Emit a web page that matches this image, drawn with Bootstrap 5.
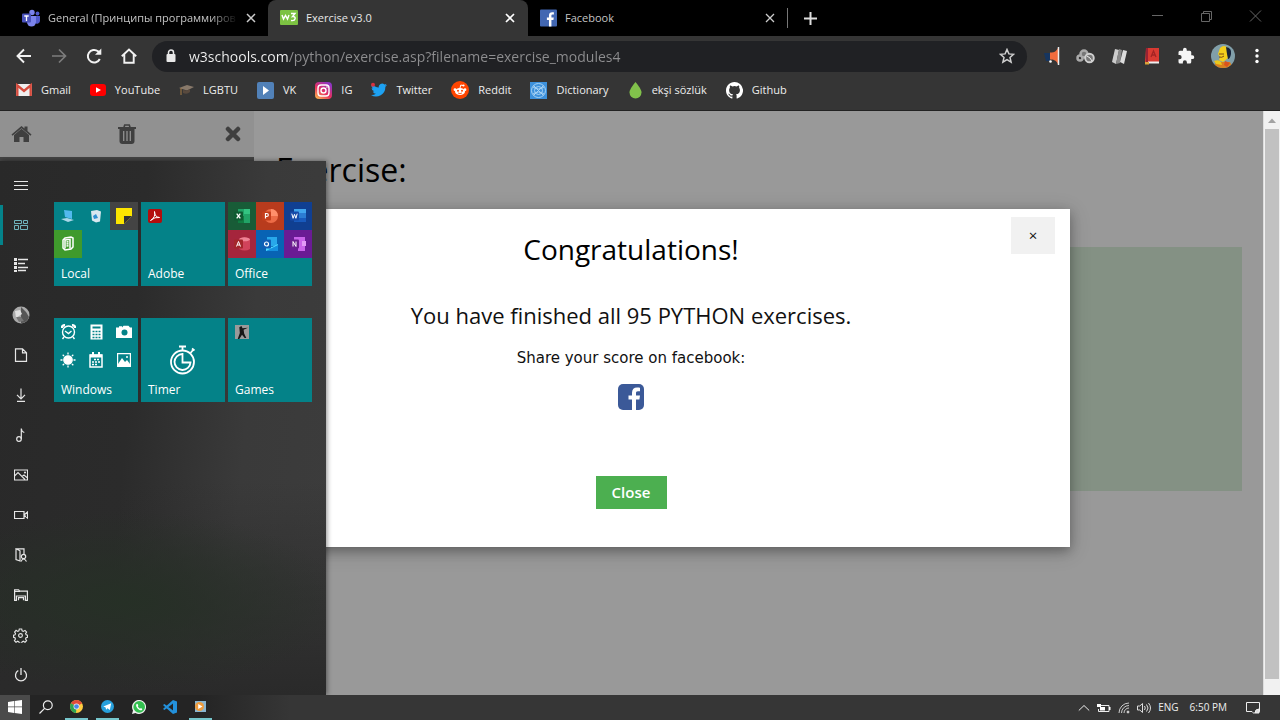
<!DOCTYPE html>
<html lang="en">
<head>
<meta charset="utf-8">
<meta name="viewport" content="width=device-width, initial-scale=1">
<title>Exercise v3.0</title>
<link href="https://cdn.jsdelivr.net/npm/bootstrap@5.3.0/dist/css/bootstrap.min.css" rel="stylesheet">
<script src="https://cdn.jsdelivr.net/npm/bootstrap@5.3.0/dist/js/bootstrap.bundle.min.js" defer></script>
<style>
  body { font-family: "Open Sans", "Noto Sans", sans-serif; background: #353535; overflow: hidden; font-size: 11px; }
  svg { display: block; flex: none; }
  button { background: none; border: 0; padding: 0; color: inherit; display: flex; align-items: center; justify-content: center; }

  /* browser tabs */
  .tab-strip { height: 36px; background: #000; }
  .page-tab { flex: 0 1 259px; min-width: 0; height: 36px; padding: 0 12px; color: #c4c4c4; }
  .page-tab.first { flex-basis: 268px; padding-left: 22px; }
  .page-tab.current { flex-basis: 260px; background: #353535; color: #e8e8e8; border-radius: 8px 8px 0 0; padding-right: 13px; }
  .page-tab .tab-title { flex: 1; min-width: 0; overflow: hidden; white-space: nowrap; }
  .tab-title.faded { -webkit-mask-image: linear-gradient(90deg, #000 85%, transparent); mask-image: linear-gradient(90deg, #000 85%, transparent); }
  .window-buttons { gap: 36px; color: #666; padding-right: 18px; padding-bottom: 4px; }

  /* toolbar */
  .tool-row { height: 40px; padding: 0 17px 0 15px; color: #f2f2f2; }
  .nav-buttons { gap: 17px; width: 137px; }
  .address-bar { height: 31px; border-radius: 16px; background: #202124; padding: 0 12px 0 13px; }
  .address-bar input { font-size: 14px; border: 0; outline: 0; padding: 0; min-width: 0; color: transparent;
    background: linear-gradient(90deg, #f4f4f4 103px, #8e8e90 103px); -webkit-background-clip: text; background-clip: text; }
  .extension-buttons { gap: 16px; margin-left: 16px; }

  .bookmark-row { height: 35px; padding: 0 16px 6px; gap: 19px; border-bottom: 1px solid #222; }
  .bookmark-row a { color: #eee; text-decoration: none; gap: 9px; font-size: 11px; white-space: nowrap; }

  /* web page */
  .web-view { background: #999; }
  .side-panel { flex: 0 0 254px; background: #444; }
  .side-tools { height: 46px; background: #919191; padding: 0 13px 0 11px; color: #3f3f3f; }
  .exercise-body { padding: 38px 21px 0 22px; color: #000; }
  .exercise-body h1 { font-size: 32px; line-height: 42px; margin: 0 0 56px; font-weight: 400; }
  .answer-box { height: 244px; background: #849184; }
  .scroll-track { flex: 0 0 17px; background: #f1f1f1; border-left: 1px solid #ddd; }
  .scroll-thumb { background: #c1c1c1; margin: 0 1px; flex: 1; }
  .page-overlay { position: absolute; inset: 0 18px 0 0; padding-top: 98px; }
  .result-dialog { width: 878px; height: 338px; background: #fff; color: #111; box-shadow: 0 4px 10px rgba(0,0,0,.25), 0 4px 20px rgba(0,0,0,.2); padding-top: 20px; }
  .result-dialog h2 { font-size: 28px; line-height: 40px; font-weight: 400; margin: 0 0 30px; color: #000; }
  .result-dialog h3 { font-size: 22px; line-height: 32px; font-weight: 400; margin: 0 0 15px; }
  .result-dialog p { font: 15px/24px "DejaVu Sans", sans-serif; margin: 0 0 14px; }
  .dismiss-button { position: absolute; top: 8px; right: 15px; width: 44px; height: 37px; background: #f1f1f1; font-size: 15px; }
  .close-button { background: #4caf50; color: #fff; width: 71px; height: 33px; font-size: 15px; font-weight: 600; margin-top: 66px; }

  /* start menu */
  .start-menu { position: absolute; left: 0; top: 50px; bottom: 0; width: 326px; color: #fff; box-shadow: 1px 0 5px rgba(0,0,0,.45);
    background: radial-gradient(220px 90px at 125px 440px, #263026, transparent), linear-gradient(transparent 60%, #2a2a2a), linear-gradient(95deg, #292929, #2b2b2b 40%, #3a3a3a 72%, #3c3c3c); }
  .rail { width: 41px; padding-top: 4px; }
  .rail button { height: 40px; width: 41px; color: #e6e6e6; }
  .rail .selected { border-left: 3px solid #04838a; padding-right: 3px; color: #70b5bd; }
  .tile-area { padding: 41px 0 0 13px; }
  .tile-grid { display: grid; grid-template-columns: repeat(3, 84px); gap: 3px; margin-bottom: 32px; }
  .start-tile { height: 84px; background: #048288; position: relative; color: #fff; align-items: stretch; justify-content: flex-start; }
  .mini-grid { display: grid; grid-template-columns: repeat(3, 28px); grid-auto-rows: 28px; align-content: start; }
  .mini-grid > span { display: flex; align-items: center; justify-content: center; }
  .tile-name { position: absolute; left: 7px; bottom: 3px; font-size: 12px; line-height: 18px; }
  .app-notes { background: #444; }
  .app-news { background: #3f9a2c; }
  .app-excel { background: #185c37; }
  .app-powerpoint { background: #b83b1d; }
  .app-word { background: #103f91; }
  .app-access { background: #a5253c; }
  .app-outlook { background: #0863b4; }
  .app-onenote { background: #6a1b94; }

  /* taskbar */
  .task-bar { height: 25px; background: linear-gradient(90deg, #242424 200px, #363636 290px); color: #eee; }
  .task-bar > button { width: 31px; height: 25px; border-bottom: 2px solid transparent; }
  .task-bar > button.running { background: linear-gradient(#76c6cc, #76c6cc) center bottom / 23px 2px no-repeat border-box; }
  .task-bar > .start-button { background: #4a4a4a; width: 30px; }
  .tray { padding-right: 20px; gap: 7px; font-size: 10px; }
</style>
</head>
<body class="d-flex flex-column vh-100">

<header>
  <div class="tab-strip d-flex align-items-center">
    <div class="page-tab first d-flex align-items-center">
      <svg class="me-2" width="18" height="18" viewBox="0 0 18 18"><circle cx="10" cy="3.500" r="2.700" fill="#7b83eb"/><circle cx="15.500" cy="4.500" r="1.900" fill="#5059c9"/><path d="M12 7h6v5a3 3 0 0 1-5 2z" fill="#5059c9"/><path d="M5 7h9v6a4.500 4.500 0 0 1-9 0z" fill="#7b83eb"/><rect y="4.500" width="9" height="9" rx="1" fill="#4b53bc"/><path d="M2.300 7h4.400M4.500 7v5" stroke="#fff" stroke-width="1.300"/></svg>
      <span class="tab-title faded">General (Принципы программиров</span>
      <button class="ms-2" aria-label="Close tab"><svg width="10" height="10" viewBox="0 0 10 10" stroke="#ccc" stroke-width="1.500"><path d="M1 1l8 8M9 1L1 9"/></svg></button>
    </div>
    <div class="page-tab current d-flex align-items-center">
      <svg class="me-2" width="18" height="16" viewBox="0 0 18 16"><rect width="18" height="15" rx="1" fill="#7cc242"/><path d="M2 5l1.500 4 2-3.500 2 3.500L9 5M11 3.500h4l-2.500 3c4-.5 3.500 5-1.500 4" fill="none" stroke="#fff" stroke-width="1.400"/></svg>
      <span class="tab-title">Exercise v3.0</span>
      <button aria-label="Close tab"><svg width="10" height="10" viewBox="0 0 10 10" stroke="#fff" stroke-width="1.700"><path d="M1 1l8 8M9 1L1 9"/></svg></button>
    </div>
    <div class="page-tab d-flex align-items-center">
      <svg class="me-2" width="17" height="18" viewBox="0 0 18 18"><rect width="18" height="18" rx="1" fill="#4267b2"/><path d="M9.500 18v-7H7.300V8.400h2.200V6.300c0-2.400 1.300-3.500 3.500-3.500.8 0 1.500.1 1.700.1v2.300h-1.300c-1 0-1.300.5-1.300 1.300v1.900h2.500l-.4 2.600h-2.100v7z" fill="#fff"/></svg>
      <span class="tab-title">Facebook</span>
      <button aria-label="Close tab"><svg width="10" height="10" viewBox="0 0 10 10" stroke="#ccc" stroke-width="1.300"><path d="M1 1l8 8M9 1L1 9"/></svg></button>
    </div>
    <svg width="1" height="20" viewBox="0 0 1 20"><path d="M0 0v20" stroke="#777" stroke-width="2"/></svg>
    <button class="ms-3" aria-label="New tab"><svg width="13" height="13" viewBox="0 0 13 13" stroke="#ddd" stroke-width="2"><path d="M6.500 0v13M0 6.500h13"/></svg></button>
    <div class="window-buttons d-flex ms-auto">
      <button aria-label="Minimize"><svg width="13" height="12" viewBox="0 0 13 12" stroke="currentColor"><path d="M1 5.500h11"/></svg></button>
      <button aria-label="Restore"><svg width="13" height="12" viewBox="0 0 13 12" fill="none" stroke="currentColor"><path d="M1.500 3.500h8v8h-8zM3.500 3V1.500h8v8H10"/></svg></button>
      <button aria-label="Close"><svg width="13" height="12" viewBox="0 0 13 12" stroke="currentColor"><path d="M1 .5l11 11M12 .5L1 11.500"/></svg></button>
    </div>
  </div>

  <div class="tool-row d-flex align-items-center">
    <div class="nav-buttons d-flex">
      <button aria-label="Back"><svg width="18" height="18" viewBox="0 0 18 18" fill="none" stroke="currentColor" stroke-width="1.900"><path d="M16 9H3M9 2.500L2.500 9 9 15.500"/></svg></button>
      <button aria-label="Forward"><svg width="18" height="18" viewBox="0 0 18 18" fill="none" stroke="#7d7d7d" stroke-width="1.700"><path d="M2 9h13M9 2.500L15.500 9 9 15.500"/></svg></button>
      <button aria-label="Reload"><svg width="18" height="18" viewBox="0 0 18 18"><path d="M14.800 12A6.300 6.300 0 1 1 13 4.200l1.500 1.400" fill="none" stroke="currentColor" stroke-width="2"/><path d="M16.300 1.500v6.300H10z" fill="currentColor"/></svg></button>
      <button aria-label="Home"><svg width="18" height="18" viewBox="0 0 18 18" fill="none" stroke="currentColor" stroke-width="1.900"><path d="M1.800 9.300L9 2.500l7.200 6.800M4.300 7.500v8.200h9.400V7.500"/></svg></button>
    </div>
    <div class="address-bar d-flex align-items-center flex-fill">
      <svg width="12" height="14" viewBox="0 0 12 14"><rect x="1.500" y="5" width="9" height="8" rx="1" fill="#e8e8e8"/><path d="M3.500 6V3.500a2.500 2.500 0 0 1 5 0V6" fill="none" stroke="#e8e8e8" stroke-width="1.500"/></svg>
      <input class="flex-fill ms-2 ps-1" type="text" aria-label="Address" value="w3schools.com/python/exercise.asp?filename=exercise_modules4">
      <button aria-label="Bookmark this page"><svg width="16" height="16" viewBox="0 0 16 16" fill="none" stroke="#d0d0d0" stroke-width="1.500"><path d="M8 1.500l1.900 4.400 4.700.4-3.600 3.100 1.100 4.700L8 11.600l-4.100 2.500L5 9.400 1.400 6.300l4.700-.4z"/></svg></button>
    </div>
    <div class="extension-buttons d-flex align-items-center">
      <button aria-label="Volume extension"><svg width="17" height="18" viewBox="0 0 17 18"><path d="M1 6h6v8H3z" fill="#16355f"/><path d="M7 5.500c4 .5 6-1 8-4.500v16c-2-4-5-4.500-8-4.500z" fill="#f26c3d"/><path d="M15.500 0v18" stroke="#eee" stroke-width="1.500"/><circle cx="7.500" cy="14.500" r="1.300" fill="#fff"/></svg></button>
      <button aria-label="Media extension"><svg width="19" height="16" viewBox="0 0 19 16" fill="none"><g stroke="#aaa" stroke-width="2.500"><circle cx="4" cy="10" r="2.500"/><circle cx="8" cy="6" r="3.500" fill="#777"/></g><circle cx="13.500" cy="10" r="4.300" fill="#777" stroke="#d0d0d0" stroke-width="1.900"/><path d="M11 8l3 2 2 3" stroke="#eee"/></svg></button>
      <button aria-label="Notes extension"><svg width="17" height="17" viewBox="0 0 17 17"><path d="M4 1l4 1-3 14-4-2z" fill="#ccc"/><path d="M8 1l3 1-2 13-4 1z" fill="#888"/><path d="M12 2l4 1-3 13-4-2z" fill="#ddd"/></svg></button>
      <button aria-label="Dictionary extension"><svg width="17" height="18" viewBox="0 0 17 18"><path d="M2 1h13v15H3l-2-1z" fill="#d83a32"/><path d="M2 1h2v15H2z" fill="#923"/><path d="M4 14.500h11v2H4z" fill="#eee"/><path d="M1 15h4v2.500H1z" fill="#dba339"/><path d="M7 10l2.500-6L12 10M8 8h3" fill="none" stroke="#a32424" stroke-width="1.300"/></svg></button>
      <button aria-label="Extensions"><svg width="18" height="18" viewBox="0 0 24 24" fill="#f5f5f5"><path d="M20.500 11H19V7a2 2 0 0 0-2-2h-4V3.500a2.500 2.500 0 0 0-5 0V5H4a2 2 0 0 0-2 2v3.800h1.500a2.700 2.700 0 0 1 0 5.400H2V20a2 2 0 0 0 2 2h3.800v-1.500a2.700 2.700 0 0 1 5.400 0V22H17a2 2 0 0 0 2-2v-4h1.500a2.500 2.500 0 0 0 0-5z"/></svg></button>
      <button aria-label="Profile"><svg width="24" height="24" viewBox="0 0 24 24"><clipPath id="face"><circle cx="12" cy="12" r="12"/></clipPath><g clip-path="url(#face)"><path d="M0 0h24v24H0z" fill="#819fa9"/><path d="M2 24l3-6h14l3 6z" fill="#d9801d"/><path d="M9 4q4-4 8 0v10l-5 4-4-2 1-3-2-3z" fill="#f3cf1c"/><path d="M15 3q6 1 5 7-1 5-3 5l-1-5z" fill="#172338"/><path d="M3 17q5-2 7 1l1 3-6-1z" fill="#eac81c"/><path d="M14 17l5 2-3 4-3-2z" fill="#d9531d"/><path d="M8 10h5M8 13q3 1 5-1" fill="none" stroke="#7b4b12"/></g></svg></button>
      <button aria-label="Menu"><svg width="12" height="16" viewBox="0 0 12 16" fill="#fff"><circle cx="6" cy="2.500" r="1.700"/><circle cx="6" cy="8" r="1.700"/><circle cx="6" cy="13.500" r="1.700"/></svg></button>
    </div>
  </div>

  <nav class="bookmark-row d-flex align-items-center" aria-label="Bookmarks">
    <a class="d-flex align-items-center" href="#"><svg width="16" height="16" viewBox="0 0 16 16"><rect y="2" width="16" height="12" rx="1" fill="#eee"/><path d="M1.300 14V3.300L8 9l6.700-5.700V14" fill="none" stroke="#d54b3d" stroke-width="2.400"/></svg>Gmail</a>
    <a class="d-flex align-items-center" href="#"><svg width="16" height="16" viewBox="0 0 16 16"><rect y="2" width="16" height="12" rx="3" fill="#f00"/><path d="M6 5.200v5.600L11 8z" fill="#fff"/></svg>YouTube</a>
    <a class="d-flex align-items-center" href="#"><svg width="15" height="16" viewBox="0 0 15 16"><path d="M0 6l8-3 7 2-7 3.500z" fill="#88796a"/><path d="M4 8v3q4 2 7-1V7L8 8.500z" fill="#594a3e"/><path d="M2 6v7" stroke="#a77d45"/></svg>LGBTU</a>
    <a class="d-flex align-items-center" href="#"><svg width="17" height="17" viewBox="0 0 17 17"><rect width="17" height="17" rx="2" fill="#5181b8"/><path d="M6 4l6 4.500L6 13z" fill="#fff"/></svg>VK</a>
    <a class="d-flex align-items-center" href="#"><svg width="17" height="17" viewBox="0 0 17 17"><defs><linearGradient id="insta" x1="0" y1="1" x2=".7" y2="0"><stop offset="0" stop-color="#fdc54a"/><stop offset=".5" stop-color="#e7305f"/><stop offset="1" stop-color="#8d35c4"/></linearGradient></defs><rect width="17" height="17" rx="4" fill="url(#insta)"/><g fill="none" stroke="#fff" stroke-width="1.400"><rect x="3" y="3" width="11" height="11" rx="3"/><circle cx="8.500" cy="8.500" r="2.500"/></g><circle cx="12" cy="5" r=".8" fill="#fff"/></svg>IG</a>
    <a class="d-flex align-items-center" href="#"><svg width="16" height="16" viewBox="0 0 24 24"><path d="M24 4.600a10 10 0 0 1-2.800.8 5 5 0 0 0 2.100-2.700 10 10 0 0 1-3.100 1.200 4.900 4.900 0 0 0-8.400 4.500A14 14 0 0 1 1.700 3.100a4.900 4.900 0 0 0 1.500 6.600 5 5 0 0 1-2.200-.6 4.900 4.900 0 0 0 3.900 4.900 5 5 0 0 1-2.200.1 4.900 4.900 0 0 0 4.600 3.400A9.900 9.900 0 0 1 0 19.500 14 14 0 0 0 21.500 7.100 10 10 0 0 0 24 4.600z" fill="#1da1f2"/><circle cx="3" cy="4" r="3" fill="#d9313d"/></svg>Twitter</a>
    <a class="d-flex align-items-center" href="#"><svg width="18" height="18" viewBox="0 0 18 18"><circle cx="9" cy="9" r="9" fill="#ff4500"/><ellipse cx="9" cy="10.500" rx="5" ry="3.600" fill="#fff"/><circle cx="4" cy="8.700" r="1.400" fill="#fff"/><circle cx="14" cy="8.700" r="1.400" fill="#fff"/><path d="M9 7l.8-3 2.500.6" fill="none" stroke="#fff"/><circle cx="12.500" cy="4.500" r="1.100" fill="#fff"/><circle cx="7" cy="9.800" r="1" fill="#ff4500"/><circle cx="11" cy="9.800" r="1" fill="#ff4500"/><path d="M7 12q2 1.200 4 0" fill="none" stroke="#ff4500" stroke-width=".8"/></svg>Reddit</a>
    <a class="d-flex align-items-center" href="#"><svg width="17" height="17" viewBox="0 0 17 17"><rect width="17" height="17" fill="#3d91dc"/><g fill="none" stroke="#a8d3f5"><circle cx="8.500" cy="8.500" r="7"/><circle cx="8.500" cy="8.500" r="4"/><path d="M3.500 3.500l10 10M13.500 3.500l-10 10M3 5q5.500 4 11 0M3 12q5.500-4 11 0"/></g></svg>Dictionary</a>
    <a class="d-flex align-items-center" href="#"><svg width="15" height="17" viewBox="0 0 15 17"><path d="M7.500 0q6 7 6 10.500a6 6 0 0 1-12 0Q1.500 7 7.500 0z" fill="#81c14b"/></svg>ekşi sözlük</a>
    <a class="d-flex align-items-center" href="#"><svg width="17" height="17" viewBox="0 0 16 16" fill="#fff"><path d="M8 0C3.580 0 0 3.580 0 8c0 3.540 2.290 6.530 5.470 7.590.4.070.55-.17.55-.38 0-.19-.01-.82-.01-1.490-2.010.37-2.530-.49-2.690-.94-.09-.23-.48-.94-.82-1.130-.28-.15-.68-.52-.01-.53.63-.01 1.080.58 1.230.82.72 1.210 1.870.87 2.330.66.070-.52.28-.87.51-1.070-1.780-.2-3.640-.89-3.640-3.950 0-.87.31-1.590.82-2.150-.08-.2-.36-1.020.08-2.120 0 0 .67-.21 2.200.82a7.600 7.600 0 0 1 4 0c1.530-1.040 2.200-.82 2.200-.82.44 1.100.16 1.920.08 2.120.51.56.82 1.270.82 2.150 0 3.070-1.870 3.750-3.650 3.950.29.25.54.73.54 1.480 0 1.070-.01 1.930-.01 2.200 0 .21.15.46.55.38A8 8 0 0 0 8 0z"/></svg>Github</a>
  </nav>
</header>

<main class="web-view d-flex flex-fill position-relative overflow-hidden">
  <aside class="side-panel">
    <div class="side-tools d-flex align-items-center justify-content-between">
      <button aria-label="Home"><svg width="21" height="18" viewBox="0 0 21 18" fill="currentColor"><path d="M10.500 3.800L3 10v7h5.500v-5h4v5H18v-7z"/><path d="M.5 9.500L10.500 1l3 2.600V1.500h3v4.600l4 3.400-1 1.200-9-7.500-9 7.500z"/></svg></button>
      <button class="pe-1" aria-label="Delete"><svg width="18" height="20" viewBox="0 0 18 20"><path d="M6 3l.8-2h4.400l.8 2" fill="none" stroke="currentColor" stroke-width="1.700"/><path d="M0 3h18v2H0z" fill="currentColor"/><path d="M1.500 5h15v12a3 3 0 0 1-3 3h-9a3 3 0 0 1-3-3z" fill="currentColor"/><path d="M5.700 7v10M9 7v10M12.300 7v10" stroke="#919191" stroke-width="1.300"/></svg></button>
      <button aria-label="Close sidebar"><svg width="16" height="16" viewBox="0 0 16 16" stroke="currentColor" stroke-width="4.500" stroke-linecap="round"><path d="M3 3l10 10M13 3L3 13"/></svg></button>
    </div>
  </aside>
  <section class="exercise-body flex-fill">
    <h1>Exercise:</h1>
    <div class="answer-box"></div>
  </section>
  <div class="scroll-track d-flex flex-column align-items-center">
    <svg width="16" height="18" viewBox="0 0 16 18"><path d="M4 12h8L8 7.500z" fill="#a2a2a2"/></svg>
    <div class="scroll-thumb align-self-stretch"></div>
    <svg width="16" height="16" viewBox="0 0 16 16"></svg>
  </div>

  <div class="page-overlay d-flex justify-content-center">
    <div class="result-dialog position-relative d-flex flex-column align-items-center" role="dialog" aria-labelledby="done">
      <button class="dismiss-button" aria-label="Dismiss">×</button>
      <h2 id="done">Congratulations!</h2>
      <h3>You have finished all 95 PYTHON exercises.</h3>
      <p>Share your score on facebook:</p>
      <a href="#" aria-label="Facebook"><svg width="26" height="26" viewBox="0 0 26 26"><rect width="26" height="26" rx="5" fill="#3b5998"/><path d="M14 26V15.500h-3.500v-4H14V8.700C14 5.300 16 3.500 19 3.500c1.500 0 2.700.1 3 .2v3.500h-2c-1.700 0-2 .8-2 1.900v2.400h4l-.6 4H18V26z" fill="#fff"/></svg></a>
      <button class="close-button">Close</button>
    </div>
  </div>

  <div class="start-menu d-flex">
    <div class="rail d-flex flex-column">
      <button aria-label="Expand"><svg width="14" height="14" viewBox="0 0 14 14" stroke="currentColor"><path d="M0 3.500h14M0 7.500h14M0 11.500h14"/></svg></button>
      <button class="selected" aria-label="Pinned tiles"><svg width="14" height="12" viewBox="0 0 14 12" fill="none" stroke="currentColor"><path d="M.5 1.500h7v3h-7zM9.500 1.500h4v3h-4zM.5 6.500h4v4h-4zM6.500 6.500h7v4h-7z"/></svg></button>
      <button aria-label="All apps"><svg width="14" height="14" viewBox="0 0 14 14" stroke="currentColor"><path d="M1.500 0v14" stroke-width="3" stroke-dasharray="3 1"/><path d="M4 1.500h10M4 5.500h7M4 9.500h10M4 12.500h8" stroke-width="1.300"/></svg></button>
      <button class="mt-auto" aria-label="Account"><svg width="18" height="18" viewBox="0 0 18 18"><circle cx="9" cy="9" r="8.500" fill="#aaa"/><path d="M9 1l5 5 3 5q-2 6-8 6z" fill="#555"/><path d="M3 5l5-1 2 4-6 4z" fill="#e0e0e0"/><path d="M4 11h5l3 4-5 1z" fill="#777"/></svg></button>
      <button aria-label="Documents"><svg width="14" height="14" viewBox="0 0 14 14" fill="none" stroke="currentColor" stroke-width="1.200"><path d="M1.500.8h7l4 4v8.500h-11zM8.500.8v4h4"/></svg></button>
      <button aria-label="Downloads"><svg width="14" height="14" viewBox="0 0 14 14" fill="none" stroke="currentColor" stroke-width="1.200"><path d="M7 .5v10M3 6.800l4 4 4-4M3 13.300h8"/></svg></button>
      <button aria-label="Music"><svg width="14" height="14" viewBox="0 0 14 14" fill="none" stroke="currentColor" stroke-width="1.200"><circle cx="5" cy="11" r="2.300"/><path d="M7.300 11V.5q0 3 3 4"/></svg></button>
      <button aria-label="Pictures"><svg width="14" height="12" viewBox="0 0 14 12" fill="none" stroke="currentColor" stroke-width="1.100"><path d="M.5 1h13v10H.5zM.5 7l3.500-3.500 7 7M8 7.500L10 6l3.500 3"/><circle cx="11" cy="3.500" r=".5"/></svg></button>
      <button aria-label="Videos"><svg width="14" height="10" viewBox="0 0 14 10" fill="none" stroke="currentColor" stroke-width="1.200"><path d="M.5 1.500h9.500v7H.5zM10 5l3.500-3v6z"/></svg></button>
      <button aria-label="Network"><svg width="14" height="14" viewBox="0 0 14 14" fill="none" stroke="currentColor" stroke-width="1.200"><path d="M2 .8h8V6M2 .8l4 2V13l-4-1.500z"/><circle cx="9.500" cy="8.500" r="2.200"/><path d="M7 13.500q2.500-5 5.500 0"/></svg></button>
      <button aria-label="Personal folder"><svg width="14" height="12" viewBox="0 0 14 12" fill="none" stroke="currentColor" stroke-width="1.200"><path d="M.6 11.300V.8h4l1 1.400h7.800v9.100h-2V7h-9v4.300zM1 2.500h5M4.500 11.300V8.700h5v2.600"/></svg></button>
      <button aria-label="Settings"><svg width="15" height="15" viewBox="0 0 16 16" fill="none" stroke="currentColor" stroke-width="1.200"><circle cx="8" cy="8" r="2"/><path d="M6.700 1h2.600l.4 2 1.300.6 1.800-1.100 1.700 1.800-1.100 1.700.6 1.300 1.500.3v2.400l-1.600.4-.5 1.300 1.100 1.800-1.700 1.700-1.800-1.100-1.300.6-.4 1.500H6.700l-.4-1.500-1.300-.6-1.800 1.100-1.700-1.700 1.100-1.800-.5-1.300L.6 9.900V7.600L2.200 7.300l.5-1.300-1-1.700 1.600-1.800L5 3.600 6.300 3z"/></svg></button>
      <button aria-label="Power"><svg width="14" height="14" viewBox="0 0 14 14" fill="none" stroke="currentColor" stroke-width="1.300"><path d="M7 0v7M4.300 2.500a5.500 5.500 0 1 0 5.400 0"/></svg></button>
    </div>
    <div class="tile-area">
      <div class="tile-grid">
        <button class="start-tile">
          <span class="mini-grid">
            <span><svg width="16" height="16" viewBox="0 0 16 16"><path d="M4 2l8 1v8l-7-2z" fill="#52b9ee"/><path d="M1 11l6-1 7 2-6 2z" fill="#a9d6e8"/></svg></span>
            <span><svg width="16" height="16" viewBox="0 0 16 16"><path d="M3 3l6-1 4 1.500-1 10-4 1-4-2z" fill="#d9e8ef"/><path d="M5 8l3-2 2 4-4 1z" fill="#2f8fd0"/></svg></span>
            <span class="app-notes"><svg width="16" height="16" viewBox="0 0 16 16"><path d="M0 0h16v16H0z" fill="#fde500"/><path d="M8 16V8h8z" fill="#333"/><path d="M16 8v8H8z" fill="#444"/></svg></span>
            <span class="app-news"><svg width="16" height="16" viewBox="0 0 16 16" fill="none" stroke="#fff" stroke-width="1.500"><path d="M5 2l6-1 2 1v9l-2 2-6 1-2-2V4zM5 3.500v9M5 4l5-.7v8.900M6.500 6l2-.3M6.500 8l2-.3M6.500 10l2-.3"/></svg></span>
          </span>
          <span class="tile-name">Local</span>
        </button>
        <button class="start-tile">
          <span class="mini-grid"><span><svg width="14" height="14" viewBox="0 0 14 14"><rect width="14" height="14" rx="2" fill="#b40d0d"/><path d="M2.500 11.500Q8 8 6.500 2.500 6.500 8 11.500 8.500 7 7.500 2.500 11.500z" fill="none" stroke="#fff"/></svg></span></span>
          <span class="tile-name">Adobe</span>
        </button>
        <button class="start-tile">
          <span class="mini-grid">
            <span class="app-excel"><svg width="16" height="16" viewBox="0 0 16 16"><path d="M4 1h12v14H4z" fill="#21a366"/><path d="M10 1h6v5h-6z" fill="#33c481"/><path d="M4 8h6v7H4z" fill="#107c41"/><rect y="3.500" width="9" height="9" rx="1" fill="#0e5c32"/><path d="M2.700 5.700l3.600 4.600M6.300 5.700l-3.600 4.600" stroke="#fff" stroke-width="1.300"/></svg></span>
            <span class="app-powerpoint"><svg width="16" height="16" viewBox="0 0 16 16"><circle cx="9" cy="8" r="7" fill="#ed6c47"/><path d="M9 1a7 7 0 0 1 7 7H9z" fill="#ff8f6b"/><rect y="3.500" width="9" height="9" rx="1" fill="#c43e1c"/><path d="M3.500 10.500v-5h1.300a1.400 1.400 0 0 1 0 3H3.500" fill="none" stroke="#fff" stroke-width="1.200"/></svg></span>
            <span class="app-word"><svg width="16" height="16" viewBox="0 0 16 16"><path d="M4 1h12v5H4z" fill="#41a5ee"/><path d="M4 5h12v5H4z" fill="#2b7cd3"/><path d="M4 10h12v4H4z" fill="#185abd"/><rect y="3.500" width="9" height="9" rx="1" fill="#174ba8"/><path d="M1.800 5.700l1.300 4.600 1.400-4 1.400 4 1.300-4.600" fill="none" stroke="#fff"/></svg></span>
            <span class="app-access"><svg width="16" height="16" viewBox="0 0 16 16"><path d="M5 3q5-3 11 0v10q-5 3-11 0z" fill="#d1435b"/><ellipse cx="10.500" cy="3.300" rx="5.500" ry="2" fill="#ee8294"/><rect y="3.500" width="9" height="9" rx="1" fill="#a4262c"/><path d="M2.500 10.500l2-5 2 5M3.300 9h2.500" fill="none" stroke="#fff"/></svg></span>
            <span class="app-outlook"><svg width="16" height="16" viewBox="0 0 16 16"><path d="M5 1h10v9H5z" fill="#28a8ea"/><path d="M4 8l6 3 6-3v7H4z" fill="#50d9ff"/><path d="M4 15l12-6v6z" fill="#1490df"/><rect y="3.500" width="9" height="9" rx="1" fill="#0f5eb5"/><circle cx="4.500" cy="8" r="2" fill="none" stroke="#fff" stroke-width="1.200"/></svg></span>
            <span class="app-onenote"><svg width="16" height="16" viewBox="0 0 16 16"><path d="M4 1h11v14H8V4H4z" fill="#ca64ea"/><path d="M12 5h4v5h-4z" fill="#e39bf7"/><rect y="3.500" width="9" height="9" rx="1" fill="#6c1f91"/><path d="M3 10.500v-5l3 5v-5" fill="none" stroke="#fff"/></svg></span>
          </span>
          <span class="tile-name">Office</span>
        </button>
      </div>
      <div class="tile-grid">
        <button class="start-tile">
          <span class="mini-grid">
            <span><svg width="15" height="16" viewBox="0 0 15 16" fill="none" stroke="#fff" stroke-width="1.400"><circle cx="7.500" cy="8" r="6"/><path d="M4 7l3.500 2.500L10.500 7M3 13l-1.500 2M12 13l1.500 2"/><path d="M.8 4Q1 1 4 1.300M14.200 4Q14 1 11 1.300" stroke-width="2.400"/></svg></span>
            <span><svg width="13" height="16" viewBox="0 0 13 16"><path d="M.5.500h12v15H.5z" fill="#fff"/><path d="M2.500 3.500h8" stroke="#048288" stroke-width="2"/><path d="M2.500 7.500h8M2.500 10.500h8M2.500 13.500h8" stroke="#048288" stroke-width="1.500" stroke-dasharray="2 1"/></svg></span>
            <span><svg width="16" height="14" viewBox="0 0 16 14"><path d="M0 2.500h3V1.200h3v1.300l1.500-1.700h5L14 2.500h2V13H0z" fill="#fff"/><circle cx="8.500" cy="7.500" r="3" fill="#048288"/></svg></span>
            <span><svg width="16" height="16" viewBox="0 0 16 16" stroke="#fff" stroke-width="1.300"><circle cx="8" cy="8" r="4.200" fill="#fff"/><path d="M8 .5v2M8 13.500v2M.5 8h2M13.500 8h2M2.700 2.700l1.400 1.400M11.900 11.900l1.400 1.400M2.700 13.300l1.400-1.400M11.900 4.100l1.400-1.400"/></svg></span>
            <span><svg width="14" height="16" viewBox="0 0 14 16"><path d="M1 3h12v12H1z" fill="none" stroke="#fff" stroke-width="1.500"/><path d="M1 2.500h12v3H1zM3 0h2v3H3zM9 0h2v3H9z" fill="#fff"/><path d="M5 7.500h6M3 10h8M3 12.500h5" stroke="#fff" stroke-width="1.500" stroke-dasharray="2 1"/></svg></span>
            <span><svg width="14" height="14" viewBox="0 0 14 14" fill="#fff"><path d="M.6.600h12.800v12.800H.6z" fill="none" stroke="#fff" stroke-width="1.200"/><path d="M1 11l4-6 3 4 2-2 3 4v2H1z"/><circle cx="10" cy="4" r="1"/></svg></span>
          </span>
          <span class="tile-name">Windows</span>
        </button>
        <button class="start-tile justify-content-center align-items-center">
          <svg width="26" height="30" viewBox="0 0 26 30" fill="none" stroke="#fff" stroke-width="1.800"><circle cx="12.500" cy="17" r="11.500"/><path d="M20.500 17.500a8 8 0 1 1-8-8.500v8.500z"/><path d="M12.500 5V2M9 1.500h7M20.500 8l3-3.500M22 3.500l2.500 2"/></svg>
          <span class="tile-name">Timer</span>
        </button>
        <button class="start-tile">
          <span class="mini-grid"><span><svg width="14" height="14" viewBox="0 0 13 13"><path d="M0 0h13v13H0z" fill="#9a9a9a"/><path d="M4 2l2-1 1 2 5-.5-4 2 .5 3.500 2 4H9L6.500 9 4 13H2.500l2-5.500z" fill="#161616"/></svg></span></span>
          <span class="tile-name">Games</span>
        </button>
      </div>
    </div>
  </div>
</main>

<footer class="task-bar d-flex align-items-center">
  <button class="start-button" aria-label="Start"><svg width="14" height="14" viewBox="0 0 14 14" fill="#fff"><path d="M0 2l6-.9v5.500H0zM6.600 1L14 0v6.600H6.600zM0 7.300h6V13l-6-.9zM6.600 7.300H14V14l-7.400-1z"/></svg></button>
  <button aria-label="Search"><svg width="14" height="14" viewBox="0 0 14 14" fill="none" stroke="#eee" stroke-width="1.200"><circle cx="8.800" cy="5.200" r="4.400"/><path d="M5.600 8.400L.5 13.500"/></svg></button>
  <button class="running" aria-label="Chrome"><svg width="13" height="13" viewBox="0 0 14 14"><circle cx="7" cy="7" r="7" fill="#ffcd40"/><path d="M7 7L1 3.500A7 7 0 0 1 13.100 3.500z" fill="#e14b3c"/><path d="M7 7L1 3.500A7 7 0 0 0 6.500 14z" fill="#2da352"/><circle cx="7" cy="7" r="3.200" fill="#eee"/><circle cx="7" cy="7" r="2.500" fill="#4a86e8"/></svg></button>
  <button class="running" aria-label="Telegram"><svg width="13" height="13" viewBox="0 0 14 14"><circle cx="7" cy="7" r="7" fill="#27a0dc"/><path d="M2.500 7L11 3.500 9.500 10.800 7 9l-1.500 1.500L5 8z" fill="#fff"/></svg></button>
  <button aria-label="WhatsApp"><svg width="14" height="14" viewBox="0 0 14 14"><path d="M0 14l1-3.500A7 7 0 1 1 3.500 13z" fill="#eee"/><circle cx="7.200" cy="6.900" r="5.800" fill="#33c050"/><path d="M4.500 4q1-1 1.800 1.200L5.800 6.300Q6.500 8 8 8.700l1-.7q2 1 1 2-1 .8-3-.3T4.300 6.500Q3.800 5 4.500 4z" fill="#fff"/></svg></button>
  <button aria-label="Visual Studio Code"><svg width="14" height="14" viewBox="0 0 14 14"><path d="M10 0l4 1.500v11L10 14 1 6 0 5l1.500-1L10 10.500v-7L1.500 10 0 9l1-1z" fill="#2391dc"/></svg></button>
  <button class="running" aria-label="Media player"><svg width="13" height="13" viewBox="0 0 13 13"><rect x="1" y="1" width="11" height="11" fill="#8ab5d0"/><circle cx="5.500" cy="6.500" r="4.500" fill="#ee9b3d"/><path d="M4.200 4v5L8.500 6.500z" fill="#fff"/></svg></button>
  <div class="tray d-flex align-items-center ms-auto">
    <svg width="12" height="8" viewBox="0 0 12 8" fill="none" stroke="#eee"><path d="M.8 6.500L6 1.500l5.200 5"/></svg>
    <svg width="14" height="10" viewBox="0 0 14 10"><path d="M3.500 2.500h8.500v6H1.500V6" fill="none" stroke="#eee"/><path d="M3 4h5v3.500H3zM12 4h1.500v3H12zM0 1h4v3H0z" fill="#fff"/></svg>
    <svg width="12" height="12" viewBox="0 0 12 12" fill="none" stroke="#ccc"><path d="M1 11A10 10 0 0 1 11 1M3.500 11A7.500 7.500 0 0 1 11 3.500M6 11a5 5 0 0 1 5-5"/><circle cx="10" cy="10" r="1" fill="#eee"/></svg>
    <svg width="14" height="12" viewBox="0 0 14 12" fill="none" stroke="#ddd"><path d="M.5 4h2.300L5.500 1.500v9L2.800 8H.5zM7.500 4q1.500 2 0 4M9.500 2.500q3 3.500 0 7M11.500 1q4 5 0 10"/></svg>
    <span>ENG</span>
    <time class="mx-1">6:50 PM</time>
    <svg class="ms-2" width="14" height="14" viewBox="0 0 14 14" fill="none" stroke="#eee"><path d="M.5 1.500h13v9H10l-2 2-2-2H.5z"/><path d="M13 8q-4 0-4 4h4z" fill="#ddd"/></svg>
  </div>
</footer>
</body>
</html>
